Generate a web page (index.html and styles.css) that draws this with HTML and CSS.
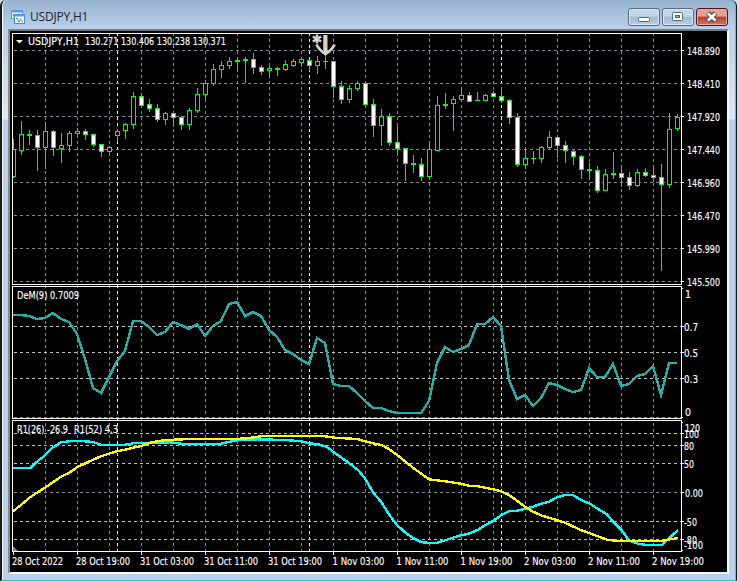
FILE: index.html
```html
<!DOCTYPE html>
<html lang="en">
<head>
<meta charset="utf-8">
<title>USDJPY,H1</title>
<link rel="stylesheet" href="styles.css">
</head>
<body>
<main class="window">
  <header class="titlebar">
    <svg class="app-icon" width="16" height="16" viewBox="0 0 16 16">
      <rect x="1.5" y="1.5" width="11" height="8" fill="#f5faff" stroke="#5b9be6"/>
      <path d="M1.500 2.500h11" stroke="#5b9be6" stroke-width="2"/>
      <path d="M3 7l1-2v3" stroke="#5b9be6" fill="none"/>
      <rect x="4.5" y="5.5" width="10" height="9" fill="#f5faff" stroke="#4489df"/>
      <path d="M4.500 6.500h10" stroke="#5b9be6" stroke-width="2"/>
      <path d="M6 10l1-1 2 4 1.500-3 1 2 1.500 1" stroke="#4489df" fill="none"/>
    </svg>
    <h1 class="title">USDJPY,H1</h1>
    <div class="controls">
      <button class="control" aria-label="Minimize"><svg width="30" height="16"><rect x="9.500" y="8.500" width="11" height="4" rx="1" fill="#fafafa" stroke="#586272"/></svg></button>
      <button class="control" aria-label="Maximize"><svg width="30" height="16"><rect x="9.500" y="3.500" width="10" height="8" rx="1" fill="#fafafa" stroke="#586272"/><rect x="12.500" y="6.500" width="4" height="2" fill="#8ba5c5" stroke="#586272"/></svg></button>
      <button class="control control-close" aria-label="Close"><svg width="30" height="16"><path d="M11 4l7.500 8M18.500 4l-7.500 8" stroke="#54464f" stroke-width="5"/><path d="M11 4.500l7.500 7M18.500 4.500l-7.500 7" stroke="#f5f5f5" stroke-width="3"/></svg></button>
    </div>
  </header>
  <section class="client">
    <svg class="panel" id="price" width="717" height="254" viewBox="10 31 717 254"></svg>
    <svg class="panel" id="dem" width="717" height="134" viewBox="10 285 717 134"></svg>
    <svg class="panel" id="range" width="717" height="153" viewBox="10 419 717 153"></svg>
  </section>
</main>
<script src="chart.js"></script>
</body>
</html>
```
FILE: styles.css
```css
* { box-sizing: border-box; }
body {
  margin: 0;
  background: #d9dde2;
  font-family: "Open Sans", "Noto Sans", sans-serif;
  overflow: hidden;
}
.window {
  width: 737px;
  height: 581px;
  display: flex;
  flex-direction: column;
  padding: 0 6px 0 6px;
  border-left: 2px solid #16191d;
  border-right: 1px solid #101418;
  border-bottom: 1px solid #35bfd2;
  border-radius: 6px 6px 0 0;
  box-shadow: inset 1px 0 #f4fbff, inset -1px 0 #45c8de;
  background:
    linear-gradient(#98b3d0, #b9d1ea 29px, transparent 30px),
    linear-gradient(#b9d1ea 29px, #dce8f5 119px, #b9d1ea 120px);
}
.titlebar {
  height: 29px;
  flex: none;
  display: flex;
  align-items: center;
  padding: 4px 2px 0 2px;
}
.app-icon { margin-top: 1px; }
.title {
  margin: 1px 0 0 4px;
  font-size: 12px;
  font-weight: 400;
  line-height: 16px;
  letter-spacing: -0.2px;
  color: #1d2530;
}
.controls {
  margin-left: auto;
  display: flex;
  gap: 2px;
}
.control {
  width: 32px;
  height: 18px;
  padding: 0;
  border: 1px solid #566a83;
  border-radius: 3px;
  box-shadow: inset 0 0 0 1px #dce9f6;
  background: linear-gradient(#c3d5e8 45%, #9eb8d3 50%, #b9cfe5);
}
.control svg { display: block; }
.control-close {
  border-color: #4a1720;
  box-shadow: inset 0 0 0 1px #e8aaa0;
  background: linear-gradient(#e3a093 45%, #b93a25 50%, #d07a63);
}
.client {
  width: 721px;
  height: 545px;
  display: flex;
  flex-direction: column;
  background: #000;
  border: solid;
  border-width: 2px 2px 2px 2px;
  border-color: #77797c #f7f8fa #f7f8fa #8c8c8c;
}
.panel { display: block; flex: none; overflow: visible; }
.label {
  font-family: "DejaVu Sans", sans-serif;
  font-size: 10.5px;
  fill: #fff;
  stroke: #fff;
  stroke-width: 0.15px;
}
.frame, .tick { fill: none; stroke: #fff; shape-rendering: crispEdges; }
.grid, .level, .day { stroke-dasharray: 3 3; shape-rendering: crispEdges; }
.grid { stroke: #778899; }
.level { stroke: #c0c0c0; }
.day { stroke: #fff; }
.candle { fill: #00ff00; shape-rendering: crispEdges; }
.candle-up { fill: #000; shape-rendering: crispEdges; }
.candle-down { fill: #fff; shape-rendering: crispEdges; }
.series { fill: none; stroke-width: 2.4; shape-rendering: crispEdges; }
.series-dem { stroke: #20b2aa; }
.series-fast { stroke: #00ffff; }
.series-slow { stroke: #ffff00; }
.arrow { fill: none; stroke: #d3d3d3; }
```
FILE: chart.js
```js
const NS = "http://www.w3.org/2000/svg";

function add(parent, tag, attrs, text) {
  const el = document.createElementNS(NS, tag);
  for (const key in attrs) el.setAttribute(key, attrs[key]);
  if (text) el.textContent = text;
  parent.appendChild(el);
}
const line = (p, cls, x1, y1, x2, y2) =>
  add(p, "path", { class: cls, d: `M${x1} ${y1}L${x2} ${y2}` });
const label = (p, x, y, width, text) =>
  add(p, "text", { class: "label", x, y, textLength: width, lengthAdjust: "spacingAndGlyphs" }, text);

const hours = [45, 77, 109, 141, 173, 205, 237, 269, 301, 333, 365, 397, 429, 461, 493, 525, 557, 589, 621, 653];
const days = [117, 309, 501];

// Vertical dashes keep one phase across all three panels.
function verticals(p, top, bottom) {
  for (const [cls, xs] of [["grid", hours], ["day", days]])
    for (const x of xs)
      add(p, "path", { class: cls, d: `M${x + 0.5} ${top}V${bottom}`, "stroke-dashoffset": (top - 33) % 6 });
}
function frame(p, top, bottom) {
  add(p, "path", { class: "frame", d: `M12.5 ${top + 0.5}H681.5V${bottom + 0.5}H12.5Z` });
}
function horizontal(p, cls, y) {
  line(p, cls, 14, y + 0.5, 681, y + 0.5);
  line(p, "tick", 682, y + 0.5, 684, y + 0.5);
}

const price = document.getElementById("price");
const dem = document.getElementById("dem");
const range = document.getElementById("range");

verticals(price, 33, 285);
["148.890", "148.410", "147.920", "147.440", "146.960", "146.470", "145.990", "145.500"].forEach((value, i) => {
  horizontal(price, "grid", 50 + 33 * i);
  label(price, 687, 54.5 + 33 * i, 33, value);
});

// Each candle: wick top, wick bottom, body top, body bottom, kind (d = down, u = up).
const candles = `139 178 149 177 u|121 155 134 151 u|130 145 134 136 u|130 171 135 148 d|122 169 131 148 u|130 156 131 148 d
133 163 145 149 u|131 152 133 146 u|128 137 131 134 u|129 140 131 135 d|134 147 134 145 d|144 157 144 152 d
146 154 147 152 u|129 142 131 136 u|123 139 124 131 u|92 129 96 125 u|93 108 96 106 d|99 112 104 109 d
104 122 108 120 d|112 125 113 120 u|111 127 113 118 d|116 130 117 125 d|108 130 110 125 u|88 113 94 111 u
80 99 83 95 u|64 86 69 84 u|61 78 65 70 u|57 69 61 66 u|57 71 60 62 u|57 83 59 61 u
53 74 59 68 d|65 75 67 72 d|66 78 68 71 u|67 76 68 70 u|60 71 64 70 u|59 67 61 66 u
57 67 59 63 u|59 71 60 66 d|56 74 61 66 u|54 69 61 62 u|61 98 61 87 d|81 104 86 100 d
85 103 88 100 u|81 91 83 89 u|82 108 83 105 d|99 137 104 126 d|109 146 116 126 u|113 146 116 143 d
126 154 142 149 d|148 181 148 164 d|155 173 163 165 u|158 181 164 177 d|142 179 149 177 u|96 151 105 151 u
93 109 104 106 u|96 131 99 104 u|88 102 95 100 u|92 102 95 102 d|92 101 100 101 u|94 101 95 101 u
91 97 93 97 d|87 103 96 101 d|99 124 100 118 d|113 167 117 165 d|149 169 158 165 u|151 164 158 159 u
146 163 147 159 u|131 149 137 148 u|137 158 137 146 d|141 163 145 151 d|150 165 151 157 d|155 179 156 170 d
163 180 169 171 u|166 193 170 191 d|169 191 174 191 u|152 179 173 175 u|167 187 173 178 d|172 190 177 186 d
169 187 172 186 u|168 177 172 176 d|167 182 175 178 d|164 271 177 185 d|113 188 129 185 u|114 131 117 129 u`;
candles.split(/[|\n]/).forEach((row, i) => {
  const [high, low, top, bottom, kind] = row.split(" ");
  const x = 13 + 8 * i;
  const left = Math.max(13, x - 2);
  const right = x + 3;
  add(price, "rect", { class: "candle", x, y: high, width: 1, height: low - high });
  add(price, "rect", { class: "candle", x: left, y: top, width: right - left, height: bottom - top });
  if (bottom - top > 2) {
    const inner = i ? left + 1 : left;
    add(price, "rect", {
      class: kind === "d" ? "candle-down" : "candle-up",
      x: inner, y: +top + 1, width: right - 1 - inner, height: bottom - top - 2
    });
  }
});
frame(price, 33, 284);
add(price, "path", { d: "M16 40H23L19.5 43.5Z", fill: "#fff" });
label(price, 28, 45, 51, "USDJPY,H1");
label(price, 85, 45, 141, "130.271 130.406 130.238 130.371");
add(price, "path", { class: "arrow", d: "M317 34.5V43.5M312.800 36.500L321.200 41.500M312.800 41.500L321.200 36.500", "stroke-width": 2.6 });
add(price, "path", { class: "arrow", d: "M325.500 35V54", "stroke-width": 4 });
add(price, "path", { d: "M323.500 35V50", stroke: "#8fa6bd" });
add(price, "path", { d: "M326.500 35V50", stroke: "#e8cfa4" });
add(price, "path", { class: "arrow", d: "M316.500 44.500Q319 50 325.500 54Q332 50 334.500 44.500", "stroke-width": 2.8 });

verticals(dem, 285, 419);
for (const [y, value] of [[326, "0.7"], [352, "0.5"], [378, "0.3"]]) {
  horizontal(dem, "level", y);
  label(dem, 684, y + 4.5, 14, value);
}
line(dem, "grid", 14, 417.5, 681, 417.5);
label(dem, 685, 298, 6, "1");
label(dem, 685, 415.5, 6, "0");
const demValues = [315, 315, 316, 319, 318, 313, 319, 322, 334, 359, 388, 393, 377, 361, 351, 321, 321, 327, 335, 332, 322,
  325, 329, 324, 336, 326, 321, 304, 302, 316, 312, 316, 330, 337, 350, 354, 360, 364, 338, 343, 384, 386, 386, 393, 401,
  408, 408, 411, 413, 413, 413, 413, 401, 363, 347, 352, 349, 345, 324, 324, 317, 326, 380, 399, 395, 406, 398, 383, 385,
  389, 392, 390, 368, 377, 377, 364, 386, 384, 376, 374, 366, 395, 363, 363];
add(dem, "polyline", { class: "series series-dem", points: demValues.map((y, i) => `${13 + 8 * i},${y}`).join(" ") });
frame(dem, 286, 418);
line(dem, "tick", 682, 288.5, 683, 288.5);
line(dem, "tick", 682, 417.5, 683, 417.5);
label(dem, 17, 299, 62, "DeM(9) 0.7009");

verticals(range, 419, 551);
for (const y of [433, 445, 463, 521, 539]) horizontal(range, "level", y);
horizontal(range, "grid", 492);
for (const [x, y, width, value] of [[685, 431.5, 15, "120"], [684, 437.5, 15, "100"], [684, 449.5, 10, "80"],
  [684, 467.5, 10, "50"], [685, 496.5, 18, "0.00"], [684, 525.5, 13, "-50"], [684, 543.5, 13, "-80"], [684, 548.5, 19, "-100"]])
  label(range, x, y, width, value);
add(range, "polyline", { class: "series series-fast", points: `13,468 31,467.7 37,461.7 45,455.3 53,447.3 61,442.3 69,441.3
77,440.7 85,441.3 93,442 101,444.7 110,445 125,444.7 135,443 150,442.7 170,442.3 183,444 220,444 227,442.3 237,440.3 250,440
257,439.3 285,440 301,441.3 309,443.3 318,444.3 327,447 333,451.7 341,457.3 350,463.7 358,470 365,478.3 373,492.3 381,501.7
389,514.3 397,525 405,532.3 413,538 421,542 429,543 437,542.7 443,541 453,537.7 461,535.3 470,533.3 478,529.7 485,525.3
493,521 501,515.3 509,511.3 517,510.7 525,508.7 533,506.7 541,503.7 549,501.7 557,497.3 565,495 573,495 581,500 590,503.7
598,509 607,514.3 613,521.7 621,529.3 629,540.3 638,543.7 647,545 662,545 669,538.3 678,530` });
add(range, "polyline", { class: "series series-slow", points: `13,511.3 21,505 30,497.3 37,492.7 45,487.7 61,476.7 69,473
77,467.3 93,459.7 101,456.3 110,453.3 117,451.3 125,449.7 142,445.7 150,442.7 158,441 167,440 190,439 240,438.7 247,438.3
263,436 323,436 335,437.7 357,439 365,441.3 375,443.7 382,445.3 389,449 398,455.7 413,467.7 422,474.3 429,479.3 445,481.3
461,483.7 470,486 478,486.3 493,489.3 501,491.3 509,495 517,500.7 525,506.7 533,511.7 542,515.7 549,517.7 565,522.7
580,529.7 607,539.7 617,541 662,541 670,539.3 678,538` });
add(range, "path", { d: "M13 546L18 551H13Z", fill: "#778899" });
frame(range, 420, 551);
line(range, "tick", 682, 422.5, 683, 422.5);
line(range, "tick", 682, 550.5, 683, 550.5);
label(range, 17, 433, 51, "R1(26) -26.9");
label(range, 74, 433, 44, "R1(52) 4.3");
["28 Oct 2022", "28 Oct 19:00", "31 Oct 03:00", "31 Oct 11:00", "31 Oct 19:00", "1 Nov 03:00", "1 Nov 11:00",
  "1 Nov 19:00", "2 Nov 03:00", "2 Nov 11:00", "2 Nov 19:00"].forEach((text, i) => {
  line(range, "tick", 13.5 + 64 * i, 552, 13.5 + 64 * i, 555);
  label(range, (i > 4 && i < 8 ? 12.5 : 12) + 64 * i, 564.5, i === 0 ? 51 : i < 5 ? 54 : 52, text);
});
```
